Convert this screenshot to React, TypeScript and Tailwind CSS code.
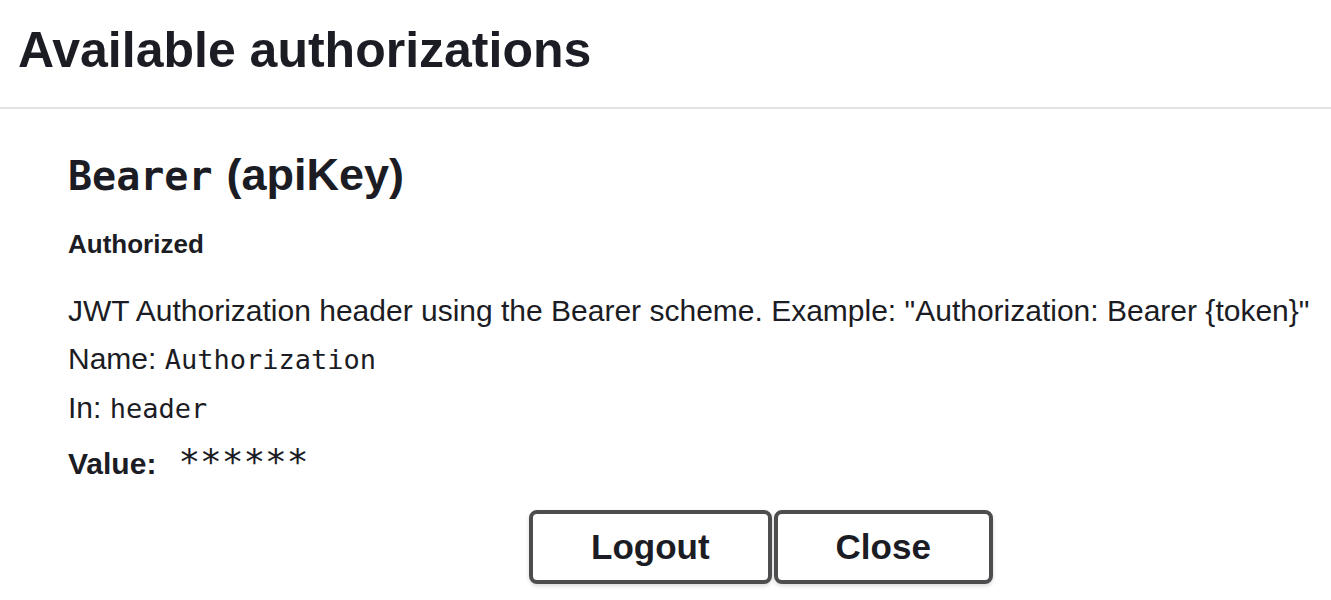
const sans = "font-['Liberation_Sans',Arial,sans-serif]";
const mono = "font-['DejaVu_Sans_Mono','Liberation_Mono',monospace]";

const AuthButton = ({ label }: { label: string }) => (
  <button
    className={`${sans} h-[74px] rounded-[8px] border-[4px] border-[#4d4d4f] bg-white px-[58px] text-[35px] font-bold text-[#1b1c24] shadow-[0_2px_4px_rgba(0,0,0,0.15)]`}
  >
    {label}
  </button>
);

export default function App() {
  return (
    <div className={`${sans} min-h-[600px] w-full bg-white text-[#1b1c24]`}>
      {/* modal header */}
      <div className="h-[109px] border-b-2 border-[#e2e2e2] pl-[18px] pt-[26px]">
        <h3 className="text-[50px] font-bold leading-[48px]">Available authorizations</h3>
      </div>

      {/* auth container */}
      <div className="pl-[68px]">
        <h4 className="mt-[42px] text-[45px] font-bold leading-[48px]">
          <code className={`${mono} text-[40px] font-bold`}>Bearer</code>
          <span className="ml-[14px]">(apiKey)</span>
        </h4>

        <h6 className="mt-[29px] text-[26px] font-bold leading-[30px]">Authorized</h6>

        <div className="mt-[28px] text-[30px] leading-[48px]">
          <p>JWT Authorization header using the Bearer scheme. Example: "Authorization: Bearer {"{token}"}"</p>
          <p>
            Name: <code className={`${mono} text-[27px]`}>Authorization</code>
          </p>
          <p>
            In: <code className={`${mono} text-[27px]`}>header</code>
          </p>
          <div className="mt-[5px] flex items-baseline">
            <label className="font-bold">Value:</label>
            <code className={`${mono} ml-[22px] text-[36px]`}>******</code>
          </div>
        </div>

        <div className="mt-[22px] flex gap-[2px] pl-[461px]">
          <AuthButton label="Logout" />
          <AuthButton label="Close" />
        </div>
      </div>
    </div>
  );
}
